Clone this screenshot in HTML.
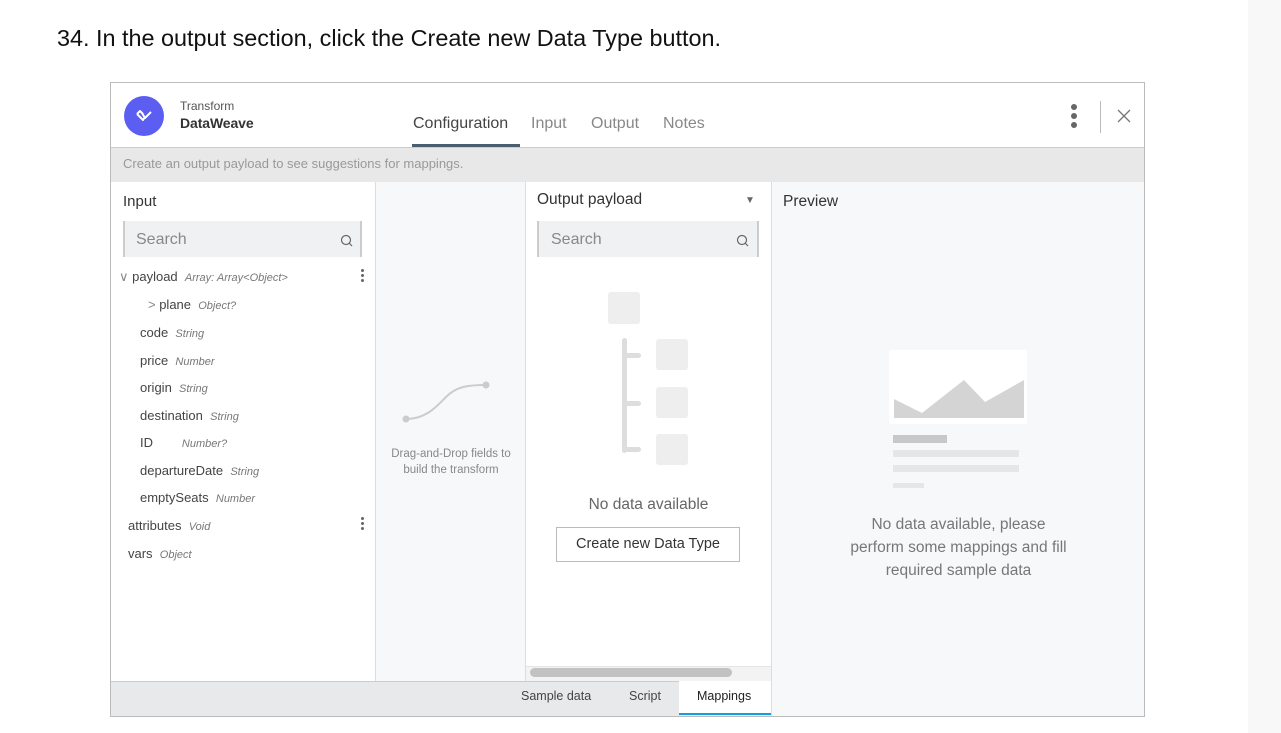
<!DOCTYPE html>
<html><head><style>
*{margin:0;padding:0;box-sizing:border-box}
body{width:1281px;height:733px;background:#fff;position:relative;overflow:hidden;font-family:"Liberation Sans",Arial,sans-serif}
.a{position:absolute}
.t{font-size:13px;color:#444}
.ty{font-size:11px;color:#777;font-style:italic}
</style></head><body>
<div class="a" style="left:1248px;top:0;width:33px;height:733px;background:#f8f8f8"></div>
<div class="a" style="left:57px;top:25px;font-size:23.4px;color:#111">34. In the output section, click the Create new Data Type button.</div>

<div class="a" style="left:110px;top:82px;width:1035px;height:635px;border:1px solid #bbb;background:#fff;overflow:hidden">
 <div class="a" style="left:13px;top:13px;width:40px;height:40px;border-radius:50%;background:#5b5ef0"></div>
 <svg class="a" style="left:23px;top:23px" width="20" height="20" viewBox="0 0 20 20"><path d="M3 8 L9 14 L11 11 M8 7 L11 12 L17 6 M3 8 L6 5 L9 8" fill="none" stroke="#fff" stroke-width="2" stroke-linejoin="round"/></svg>
 <div class="a" style="left:69px;top:16px;font-size:12px;color:#555">Transform</div>
 <div class="a" style="left:69px;top:32px;font-size:14px;color:#333;font-weight:bold;letter-spacing:-.1px">DataWeave</div>
 <div class="a" style="left:302px;top:32px;font-size:16px;color:#444">Configuration</div>
 <div class="a" style="left:301px;top:61px;width:108px;height:3px;background:#4a5e6e"></div>
 <div class="a" style="left:420px;top:32px;font-size:16px;color:#888">Input</div>
 <div class="a" style="left:480px;top:32px;font-size:16px;color:#888">Output</div>
 <div class="a" style="left:552px;top:32px;font-size:16px;color:#888">Notes</div>
 <div class="a" style="left:960px;top:21px;width:6px;height:6px;border-radius:50%;background:#666;box-shadow:0 9px 0 #666,0 18px 0 #666"></div>
 <div class="a" style="left:989px;top:18px;width:1px;height:32px;background:#bbb"></div>
 <svg class="a" style="left:1006px;top:26px" width="14" height="14"><path d="M1 1L13 13M13 1L1 13" stroke="#777" stroke-width="1.3"/></svg>
 <div class="a" style="left:0;top:64px;width:1035px;height:35px;background:#e8e8e8;border-top:1px solid #ccc"></div>
 <div class="a" style="left:12px;top:73px;font-size:13px;color:#999">Create an output payload to see suggestions for mappings.</div>
 <div class="a" style="left:264px;top:99px;width:151px;height:500px;background:#f7f8fa;border-left:1px solid #ddd;border-right:1px solid #ddd"></div>
 <div class="a" style="left:660px;top:99px;width:375px;height:535px;background:#f7f8fa;border-left:1px solid #ddd"></div>
 <div class="a" style="left:12px;top:110px;font-size:15px;color:#333">Input</div>
 <div class="a" style="left:12px;top:138px;width:239px;height:36px;background:#f0f1f3;border-left:2px solid #ccc;border-right:2px solid #ccc"></div>
 <div class="a" style="left:25px;top:148px;font-size:16px;color:#888">Search</div>
 <svg class="a" style="left:229px;top:151px" width="13" height="13"><circle cx="6" cy="6" r="4.5" fill="none" stroke="#666" stroke-width="1.2"/><path d="M9 9L12 12" stroke="#666" stroke-width="1.2"/></svg>
 <div class="a t" style="left:8px;top:186px"><span style="color:#888">∨</span> payload &nbsp;<span class="ty">Array: Array&lt;Object&gt;</span></div>
 <div class="a t" style="left:37px;top:214px"><span style="color:#888">&gt;</span> plane &nbsp;<span class="ty">Object?</span></div>
 <div class="a t" style="left:29px;top:242px">code &nbsp;<span class="ty">String</span></div>
 <div class="a t" style="left:29px;top:270px">price &nbsp;<span class="ty">Number</span></div>
 <div class="a t" style="left:29px;top:297px">origin &nbsp;<span class="ty">String</span></div>
 <div class="a t" style="left:29px;top:325px">destination &nbsp;<span class="ty">String</span></div>
 <div class="a t" style="left:29px;top:352px">ID &nbsp;&nbsp;&nbsp;&nbsp;&nbsp;&nbsp;&nbsp;<span class="ty">Number?</span></div>
 <div class="a t" style="left:29px;top:380px">departureDate &nbsp;<span class="ty">String</span></div>
 <div class="a t" style="left:29px;top:407px">emptySeats &nbsp;<span class="ty">Number</span></div>
 <div class="a t" style="left:17px;top:435px">attributes &nbsp;<span class="ty">Void</span></div>
 <div class="a t" style="left:17px;top:463px">vars &nbsp;<span class="ty">Object</span></div>
 <div class="a" style="left:250px;top:186px;width:3px;height:3px;border-radius:50%;background:#666;box-shadow:0 5px 0 #666,0 10px 0 #666"></div>
 <div class="a" style="left:250px;top:434px;width:3px;height:3px;border-radius:50%;background:#666;box-shadow:0 5px 0 #666,0 10px 0 #666"></div>
 <svg class="a" style="left:285px;top:296px" width="95" height="55"><path d="M10 40 C30 40 40 28 50 18 C60 8 70 6 90 6" fill="none" stroke="#ccc" stroke-width="2"/><circle cx="10" cy="40" r="3.5" fill="#ccc"/><circle cx="90" cy="6" r="3.5" fill="#ccc"/></svg>
 <div class="a" style="left:266px;top:363px;width:148px;text-align:center;font-size:11.5px;color:#888;line-height:16px">Drag-and-Drop fields to<br>build the transform</div>
 <div class="a" style="left:426px;top:108px;font-size:15.5px;color:#333">Output payload</div>
 <div class="a" style="left:634px;top:112px;font-size:10px;color:#666">▼</div>
 <div class="a" style="left:426px;top:138px;width:222px;height:36px;background:#f0f1f3;border-left:2px solid #ccc;border-right:2px solid #ccc"></div>
 <div class="a" style="left:440px;top:148px;font-size:16px;color:#888">Search</div>
 <svg class="a" style="left:625px;top:151px" width="13" height="13"><circle cx="6" cy="6" r="4.5" fill="none" stroke="#666" stroke-width="1.2"/><path d="M9 9L12 12" stroke="#666" stroke-width="1.2"/></svg>
 <div class="a" style="left:497px;top:209px;width:32px;height:32px;border-radius:3px;background:#eee"></div>
 <div class="a" style="left:511px;top:255px;width:5px;height:115px;border-radius:3px;background:#ddd"></div>
 <div class="a" style="left:511px;top:270px;width:19px;height:5px;border-radius:3px;background:#ddd"></div>
 <div class="a" style="left:511px;top:318px;width:19px;height:5px;border-radius:3px;background:#ddd"></div>
 <div class="a" style="left:511px;top:364px;width:19px;height:5px;border-radius:3px;background:#ddd"></div>
 <div class="a" style="left:545px;top:256px;width:32px;height:31px;border-radius:3px;background:#eee"></div>
 <div class="a" style="left:545px;top:304px;width:32px;height:31px;border-radius:3px;background:#eee"></div>
 <div class="a" style="left:545px;top:351px;width:32px;height:31px;border-radius:3px;background:#eee"></div>
 <div class="a" style="left:415px;top:413px;width:245px;text-align:center;font-size:15.5px;color:#666">No data available</div>
 <div class="a" style="left:445px;top:444px;width:184px;height:35px;border:1px solid #bbb;text-align:center;line-height:33px;font-size:14.5px;color:#333">Create new Data Type</div>
 <div class="a" style="left:415px;top:583px;width:245px;height:16px;background:#f3f3f3;border-top:1px solid #e5e5e5"></div>
 <div class="a" style="left:419px;top:585px;width:202px;height:9px;border-radius:5px;background:#c2c2c2"></div>
 <div class="a" style="left:672px;top:110px;font-size:15.5px;color:#333">Preview</div>
 <div class="a" style="left:778px;top:267px;width:138px;height:74px;background:#fff"></div>
 <svg class="a" style="left:778px;top:267px" width="138" height="74"><path d="M5 49 L33 63 L75 30 L96 52 L135 30 L135 68 L5 68Z" fill="#d4d4d4"/></svg>
 <div class="a" style="left:782px;top:352px;width:54px;height:8px;background:#c8c8c8"></div>
 <div class="a" style="left:782px;top:367px;width:126px;height:7px;background:#e6e6e6"></div>
 <div class="a" style="left:782px;top:382px;width:126px;height:7px;background:#e6e6e6"></div>
 <div class="a" style="left:782px;top:400px;width:31px;height:5px;background:#e6e6e6"></div>
 <div class="a" style="left:690px;top:430px;width:315px;text-align:center;font-size:15.5px;color:#777;line-height:23px">No data available, please<br>perform some mappings and fill<br>required sample data</div>
 <div class="a" style="left:0;top:598px;width:660px;height:36px;background:#e8e9ea;border-top:1px solid #ccc"></div>
 <div class="a" style="left:568px;top:598px;width:92px;height:34px;background:#fff;border-bottom:2px solid #1a9be0"></div>
 <div class="a" style="left:410px;top:606px;font-size:12.5px;color:#444">Sample data</div>
 <div class="a" style="left:518px;top:606px;font-size:12.5px;color:#444">Script</div>
 <div class="a" style="left:586px;top:606px;font-size:12.5px;color:#222">Mappings</div>
</div>
</body></html>
